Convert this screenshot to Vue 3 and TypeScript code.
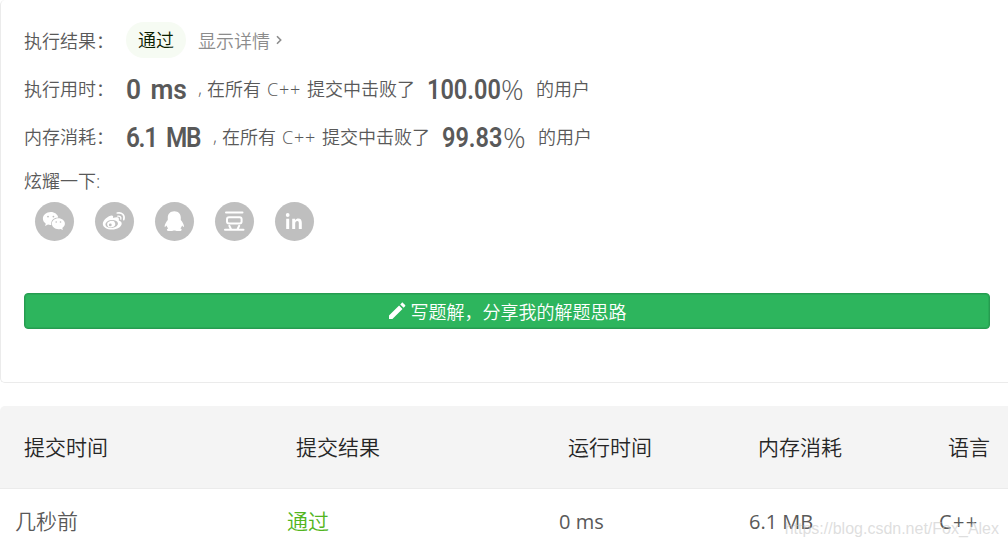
<script setup lang="ts">
import { ref } from 'vue'

const metrics = ref([
  { id: 'time', label: '执行用时', value: '0 ms', percent: '100.00' },
  { id: 'memory', label: '内存消耗', value: '6.1 MB', percent: '99.83' },
])

const shareList = ['wechat', 'weibo', 'qq', 'douban', 'linkedin']

const columns = ['提交时间', '提交结果', '运行时间', '内存消耗', '语言']

const submissions = ref([
  { id: 1, time: '几秒前', result: '通过', runtime: '0 ms', memory: '6.1 MB', lang: 'C++' },
])
</script>

<template>
  <div class="submission-page">
    <section class="result-card">
      <div class="result-row">
        <span class="label">执行结果：</span>
        <span class="status-tag">通过</span>
        <a class="detail-link">
          <span>显示详情</span>
          <svg width="6" height="10" viewBox="0 0 6 10">
            <path d="M1 1.2 4.7 5 1 8.8" fill="none" stroke="#8c8c8c" stroke-width="1.6" />
          </svg>
        </a>
      </div>

      <div v-for="item in metrics" :key="item.id" class="metric-row" :class="item.id">
        <span class="label">{{ item.label }}：</span>
        <span class="value">{{ item.value }}</span>
        <span class="comma">,</span>
        <span>在所有</span>
        <span class="lang">C++</span>
        <span>提交中击败了</span>
        <span class="percent">{{ item.percent }}</span>
        <span class="sign">%</span>
        <span>的用户</span>
      </div>

      <div class="share-title">炫耀一下:</div>
      <div class="share-list">
        <span v-for="name in shareList" :key="name" class="share-icon">
          <svg width="39" height="39" viewBox="0 0 39 39" fill="#fff">
            <template v-if="name === 'wechat'">
              <path d="M15.800 10c-4.500 0-7.900 3-7.900 6.600 0 2.100 1.100 3.900 2.900 5.100l-.8 2.400 3-1.500c1.200.4 2.300.5 3.300.3-.6-4.300 2.500-7.300 7-7.300C22.700 12.300 19.600 10 15.800 10z" />
              <path d="M23.400 16.300c-3.600 0-6.500 2.400-6.500 5.500s2.900 5.400 6.500 5.400c.8 0 1.500-.1 2.200-.3l2.300 1.200-.6-2.100c1.600-1 2.600-2.500 2.600-4.200 0-3.100-3-5.500-6.500-5.500z" />
              <g fill="#bfbfbf">
                <circle cx="13" cy="14.600" r=".9" />
                <circle cx="18.400" cy="14.600" r=".9" />
                <circle cx="21.200" cy="20" r=".8" />
                <circle cx="25.500" cy="20" r=".8" />
              </g>
            </template>
            <template v-else-if="name === 'weibo'">
              <path d="M16.800 13.500c1.300 0 1.700 1 1.200 2.600 2.800-1.100 5.600-1.300 5.900.8.100.6 0 1-.2 1.600 1.900.5 3 1.500 3 3 0 3.300-4.500 6.100-9.600 6.100-5.200 0-9.300-2.300-9.300-5.800 0-3.600 5.700-8.300 9-8.300z" />
              <ellipse cx="16.700" cy="22" rx="6.300" ry="4" fill="#bfbfbf" transform="rotate(-7 16.700 22)" />
              <ellipse cx="16.200" cy="22.200" rx="4.100" ry="3.200" transform="rotate(-15 16.200 22.200)" />
              <circle cx="15.300" cy="22.900" r="1.400" fill="#bfbfbf" />
              <g fill="none" stroke="#fff" stroke-linecap="round">
                <path d="M22.300 11c4.600-1 7.800 2.200 6.500 6.600" stroke-width="1.700" />
                <path d="M22.800 14.200c2.200-.4 3.500.8 3 2.900" stroke-width="1.300" />
              </g>
            </template>
            <template v-else-if="name === 'qq'">
              <path d="M19.300 9.200c-4.100 0-6.600 2.900-6.500 6.500v2.200c-1.200 1.600-3.200 4.200-3.200 6.400 0 1 .8.900 1.900-.7.300 1.100.9 2 1.700 2.800-1.700.5-1.900 2.500.8 2.600 2 .1 3.700-.1 4.600-.5h1.400c1 .4 2.700.6 4.600.5 2.700-.1 2.600-2.100.8-2.600.8-.8 1.400-1.700 1.700-2.800 1.100 1.600 1.900 1.700 1.900.7 0-2.200-1.900-4.800-3.200-6.400v-2.200c.1-3.600-2.400-6.500-6.500-6.500z" />
            </template>
            <template v-else-if="name === 'douban'">
              <g fill="none" stroke="#fff" stroke-width="2" stroke-linecap="round">
                <path d="M11 10.600h16.500M10 27.800h18.500M14.300 23.800l1.700 3.400M24.200 23.800l-1.700 3.400" />
                <rect x="12" y="15.200" width="14.600" height="6.300" rx="2" />
              </g>
            </template>
            <template v-else>
              <circle cx="12.700" cy="13" r="1.900" />
              <path d="M11.200 16.800h3v10.300h-3zM17.200 16.800h2.900v1.500c.8-1.200 1.900-1.800 3.200-1.800 2.400 0 3.500 1.500 3.500 4.300v6.300h-3v-5.700c0-1.600-.4-2.400-1.500-2.400-1.300 0-2.100.9-2.100 2.600v5.500h-3z" />
            </template>
          </svg>
        </span>
      </div>

      <button class="write-btn">
        <svg width="18" height="18" viewBox="0 0 18 18" fill="#fff">
          <path d="M1 13.600 11.100 3.500l3.400 3.400L4.400 17H1zM12.200 2.400l1.500-1.500c.4-.4.900-.4 1.300 0l2.100 2.100c.4.4.4.900 0 1.300l-1.500 1.500z" />
        </svg>
        <span>写题解，分享我的解题思路</span>
      </button>
    </section>

    <section class="history">
      <div class="table-row table-head">
        <span v-for="col in columns" :key="col">{{ col }}</span>
      </div>
      <div v-for="row in submissions" :key="row.id" class="table-row table-body">
        <span>{{ row.time }}</span>
        <span class="passed">{{ row.result }}</span>
        <span class="latin">{{ row.runtime }}</span>
        <span class="latin">{{ row.memory }}</span>
        <span class="latin row-lang">{{ row.lang }}</span>
      </div>
      <div class="watermark">https://blog.csdn.net/Fox_Alex</div>
    </section>
  </div>
</template>

<style>
body {
  background: #fff;
  overflow: hidden;
}
</style>

<style scoped>
.submission-page {
  height: 545px;
  overflow: hidden;
  font-family: 'Open Sans', 'Noto Sans CJK SC', sans-serif;
  font-weight: 350;
  font-size: 18px;
  color: #595959;
}

.result-card {
  box-sizing: border-box;
  height: 383px;
  padding: 22px 18px 0 23px;
  border-left: 1px solid #ebebeb;
  border-bottom: 1px solid #ebebeb;
  border-radius: 5px 0 0 5px;
}

.result-row,
.metric-row {
  display: flex;
  align-items: center;
  white-space: nowrap;
}

.result-row {
  height: 36px;
}

.label {
  width: 102px;
}

.result-row .label {
  padding-bottom: 1px;
}

.status-tag {
  width: 60px;
  height: 36px;
  line-height: 36px;
  border-radius: 18px;
  background: #f6fbf3;
  color: #0b2000;
  text-align: center;
}

.detail-link {
  display: flex;
  align-items: center;
  gap: 6px;
  margin-left: 12px;
  color: #8c8c8c;
}

.detail-link span {
  padding-bottom: 1px;
}

.metric-row {
  height: 48px;
}

.metric-row.time {
  margin-top: 6px;
}

/* condensed, DIN-like figures */
.metric-row .value,
.metric-row .percent {
  padding-top: 3px;
  font-family: Roboto, sans-serif;
  font-size: 28px;
  font-weight: 600;
  transform-origin: left center;
}

.value {
  width: 72px;
  word-spacing: 3px;
  transform: scaleX(0.94);
}

.memory .value {
  width: 87px;
  letter-spacing: -1.5px;
  word-spacing: 5px;
  transform: scaleX(0.87);
}

.comma {
  width: 9px;
}

.lang {
  width: 46px;
  text-align: center;
  letter-spacing: 0.8px;
}

.percent {
  width: 74px;
  margin-left: 12px;
  transform: scaleX(0.84);
}

.memory .percent {
  width: 61px;
}

.sign {
  width: 35px;
  font-size: 28px;
}

.metric-row .lang,
.metric-row .sign {
  padding-top: 1px;
}

.share-title {
  height: 42px;
  line-height: 43px;
}

.share-list {
  display: flex;
  gap: 21px;
  margin-left: 11px;
  height: 39px;
}

.share-icon {
  width: 39px;
  height: 39px;
  border-radius: 50%;
  background: #bfbfbf;
}

.write-btn {
  box-sizing: border-box;
  display: flex;
  align-items: center;
  justify-content: center;
  gap: 5px;
  width: 100%;
  height: 36px;
  margin-top: 52px;
  padding: 0;
  border: 1px solid #269c50;
  border-radius: 4px;
  background: #2db55d;
  box-shadow: inset 0 0 0 1px rgba(38, 156, 80, 0.45);
  color: #fff;
  font: inherit;
}

.write-btn span {
  padding-bottom: 1px;
}

.history {
  position: relative;
  margin-top: 23px;
}

.table-row {
  display: grid;
  grid-template-columns: 272px 272px 190px 190px 1fr;
  align-items: center;
  font-size: 21px;
  white-space: nowrap;
}

.table-row span {
  padding-bottom: 2px;
}

.table-head {
  height: 82px;
  padding-left: 24px;
  border-bottom: 1px solid #ebebeb;
  border-radius: 5px 0 0;
  background: #f4f4f4;
  color: #262626;
}

.table-body {
  height: 64px;
  padding-left: 15px;
}

.table-body .latin {
  padding-bottom: 0;
  font-size: 20px;
  font-weight: 400;
}

.passed {
  color: #52b520;
}

.row-lang {
  letter-spacing: 1.4px;
}

.watermark {
  position: absolute;
  right: 9px;
  bottom: 15px;
  font-family: 'Liberation Sans', sans-serif;
  font-size: 16px;
  font-weight: 400;
  color: rgba(200, 200, 200, 0.6);
}
</style>
